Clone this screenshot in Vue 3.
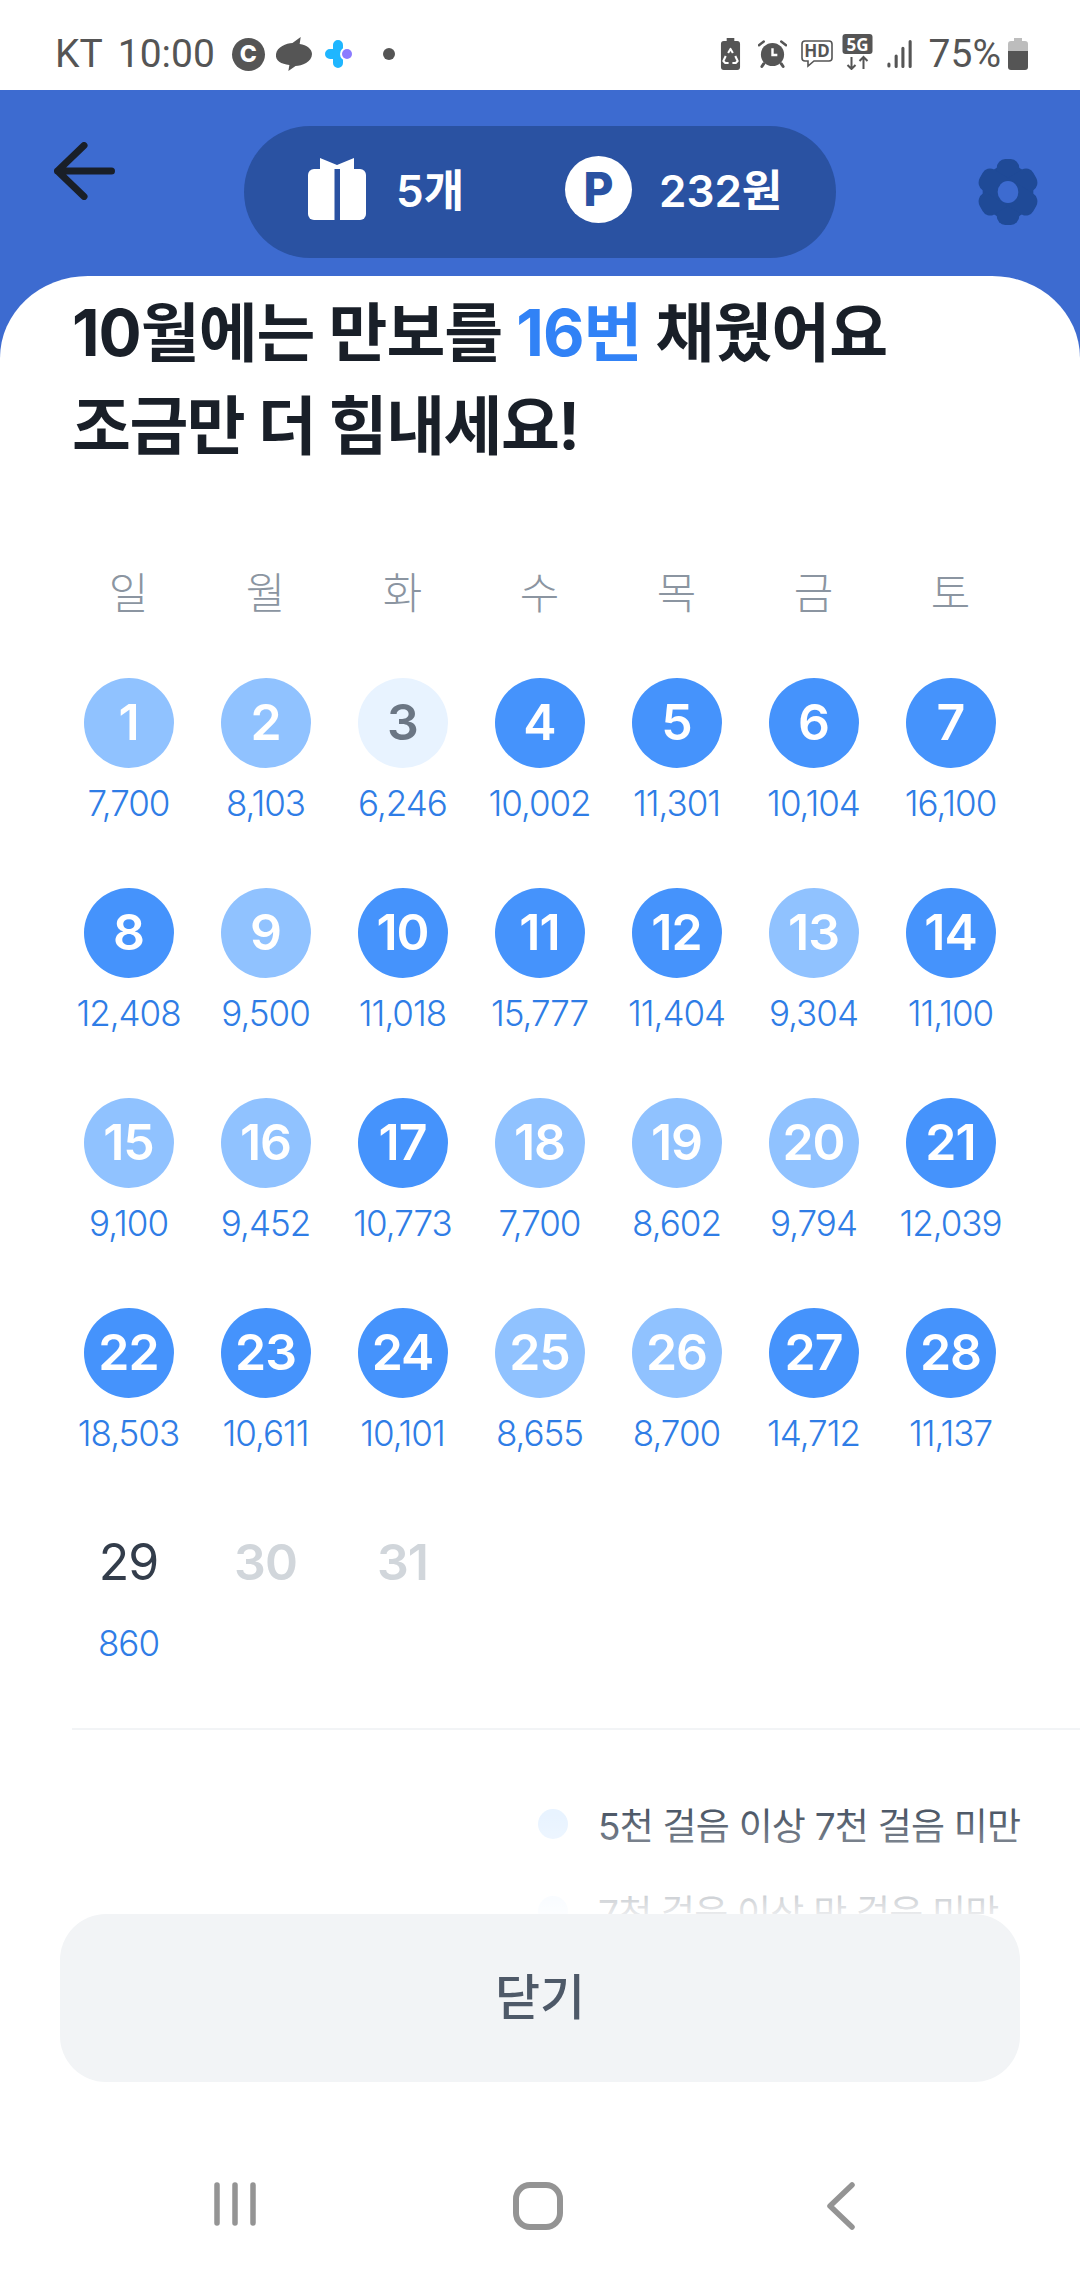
<script setup>
const weekdays = ['일', '월', '화', '수', '목', '금', '토']
const steps = [7700, 8103, 6246, 10002, 11301, 10104, 16100, 12408, 9500, 11018, 15777, 11404, 9304, 11100, 9100, 9452, 10773, 7700, 8602, 9794, 12039, 18503, 10611, 10101, 8655, 8700, 14712, 11137, 860]
const level = (n) => (n >= 10000 ? 'full' : n >= 7000 ? 'mid' : n >= 5000 ? 'low' : 'none')
const days = Array.from({ length: 31 }, (_, i) => {
  const n = steps[i]
  return {
    day: i + 1,
    label: n === undefined ? '' : n.toLocaleString('en-US'),
    cls: n === undefined ? 'future' : level(n),
  }
})
const legend = ['5천 걸음 이상 7천 걸음 미만', '7천 걸음 이상 만 걸음 미만']
</script>

<template>
  <div class="screen">
    <div class="status">
      <div class="status-left">
        <span class="carrier">KT</span>
        <span class="clock">10:00</span>
        <span class="c-badge">C</span>
        <svg class="i-blob" width="37" height="36" viewBox="0 0 36 36" preserveAspectRatio="none"><path d="M1 18C2 11 11 7 17 7L25 1L24 8C31 9 36 13 36 18C36 26 26 30 20 30L13 35L14 29C6 28 0 25 1 18Z" fill="#555"/></svg>
        <svg class="i-plus" width="28" height="28" viewBox="0 0 28 28"><path d="M13 5V23M5 14H18" stroke="#1fb6ff" stroke-width="10" stroke-linecap="round"/><circle cx="22" cy="14" r="7" fill="#fff"/><circle cx="22" cy="14" r="5" fill="#8b7bff"/></svg>
        <span class="dot"></span>
      </div>
      <div class="status-right">
        <svg width="21" height="32" viewBox="0 0 22 32" preserveAspectRatio="none"><path d="M7 0H15V3H18A3 3 0 0 1 21 6V29A3 3 0 0 1 18 32H4A3 3 0 0 1 1 29V6A3 3 0 0 1 4 3H7Z" fill="#555"/><path d="M8.500 15L11 11L13.500 15M16 18L18.500 23L16.500 25H13M9 25H5.500L3.500 23L6 18" stroke="#fff" stroke-width="2.200" fill="none" stroke-linejoin="round"/></svg>
        <svg class="i-alarm" width="29" height="30" viewBox="0 0 30 30"><path d="M1 6L6 2M29 6L24 2" stroke="#555" stroke-width="2.500" stroke-linecap="round"/><path d="M6 25L4 28M24 25L26 28" stroke="#555" stroke-width="3" stroke-linecap="round"/><circle cx="15" cy="15.500" r="12" fill="#555"/><path d="M15 9V16H20" stroke="#fff" stroke-width="2.500" fill="none"/></svg>
        <svg class="i-hd" width="32" height="28" viewBox="0 0 32 28"><path d="M4 1H28A3 3 0 0 1 31 4V18A3 3 0 0 1 28 21H13L7 26V21H4A3 3 0 0 1 1 18V4A3 3 0 0 1 4 1Z" fill="none" stroke="#555" stroke-width="1.600"/><text x="16" y="17" text-anchor="middle" class="svg-label">HD</text></svg>
        <svg class="i-5g" width="31" height="36" viewBox="0 0 30 36"><rect width="30" height="20" rx="3" fill="#555"/><text x="15" y="17" text-anchor="middle" class="svg-label inverse">5G</text><path d="M9 23V35M5 31L9 35L13 31M21 35V23M17 27L21 23L25 27" stroke="#555" stroke-width="2" fill="none"/></svg>
        <svg class="i-signal" width="27" height="30" viewBox="0 0 28 30"><path d="M2 25.500V27.500M9.500 17V28M16.500 9V28M24 2V28" stroke="#555" stroke-width="3.200" stroke-linecap="round"/></svg>
        <span class="pct">75%</span>
        <svg width="20" height="32" viewBox="0 0 20 32"><path d="M6 0H14V3H17A3 3 0 0 1 20 6V13H0V6A3 3 0 0 1 3 3H6Z" fill="#bdbdbd"/><path d="M0 13H20V29A3 3 0 0 1 17 32H3A3 3 0 0 1 0 29Z" fill="#555"/></svg>
      </div>
    </div>

    <header class="header">
      <svg class="back" width="62" height="58" viewBox="0 0 62 58"><path d="M57.500 29H3.500M30 3.500L3.500 29L30 54.500" stroke="#191f28" stroke-width="7" fill="none" stroke-linecap="round" stroke-linejoin="round"/></svg>
      <div class="pill">
        <div class="pill-item gift">
          <svg width="58" height="62" viewBox="0 0 58 62"><path d="M12 0L29 7L46 0V13H12Z" fill="#fff"/><rect y="11" width="58" height="51" rx="6" fill="#fff"/><rect x="26.500" y="11" width="5.500" height="51" fill="#2a52a2"/></svg>
          <span class="pill-text">5개</span>
        </div>
        <div class="pill-item point">
          <span class="p-mark">P</span>
          <span class="pill-text">232원</span>
        </div>
      </div>
      <svg class="gear" width="62" height="66" viewBox="0 0 66 66" preserveAspectRatio="none">
        <g fill="#1f4a97">
          <circle cx="33" cy="33" r="27"/>
          <rect x="21" y="0" width="24" height="66" rx="9"/>
          <rect x="21" y="0" width="24" height="66" rx="9" transform="rotate(60 33 33)"/>
          <rect x="21" y="0" width="24" height="66" rx="9" transform="rotate(120 33 33)"/>
        </g>
        <circle cx="33" cy="33" r="11" fill="#3d6bd0"/>
      </svg>
    </header>

    <div class="sheet-wrap">
      <main class="sheet">
        <div class="scroll">
          <h1 class="title">10월에는 만보를 <em>16번</em> 채웠어요<br><span class="title-2">조금만 더 힘내세요!</span></h1>
          <div class="calendar">
            <div class="weekdays">
              <span v-for="w in weekdays" :key="w">{{ w }}</span>
            </div>
            <div class="grid">
              <div v-for="d in days" :key="d.day" class="cell" :class="d.cls">
                <span class="num">{{ d.day }}</span>
                <span v-if="d.label" class="count">{{ d.label }}</span>
              </div>
            </div>
          </div>
          <ul class="legend">
            <li v-for="l in legend" :key="l"><i></i>{{ l }}</li>
          </ul>
        </div>
        <div class="footer">
          <button class="close">닫기</button>
        </div>
      </main>
    </div>

    <nav class="nav">
      <svg class="n-recent" width="42" height="44" viewBox="0 0 42 44"><path d="M3 3V41M21 3V41M39 3V41" stroke="#949494" stroke-width="5.500" stroke-linecap="round"/></svg>
      <svg class="n-home" width="50" height="48" viewBox="0 0 50 48"><rect x="3" y="3" width="44" height="42" rx="14" fill="none" stroke="#949494" stroke-width="6"/></svg>
      <svg class="n-back" width="28" height="48" viewBox="0 0 28 48"><path d="M25 3L3 24L25 45" stroke="#949494" stroke-width="5.500" fill="none" stroke-linecap="round" stroke-linejoin="round"/></svg>
    </nav>
  </div>
</template>

<style>
html, body { margin: 0; background: #fff; }
</style>

<style scoped>
.screen {
  width: 1080px;
  height: 2280px;
  display: flex;
  flex-direction: column;
  overflow: hidden;
  background: #fff;
  font-family: Inter, "Noto Sans CJK KR", sans-serif;
}
.status {
  height: 90px;
  flex: none;
  box-sizing: border-box;
  padding: 18px 52px 0 55px;
  display: flex;
  justify-content: space-between;
  align-items: center;
  color: #555;
  font-family: Roboto, sans-serif;
  font-size: 39px;
}
.status-left, .status-right { display: flex; align-items: center; }
.clock { margin-left: 15px; }
.c-badge {
  width: 33px; height: 33px; margin-left: 17px; border-radius: 50%;
  background: #555; color: #fff;
  font: 800 23px/33px Inter, sans-serif; text-align: center;
}
.i-blob { margin-left: 10px; }
.i-plus { margin-left: 13px; }
.dot { width: 12px; height: 12px; margin-left: 30px; border-radius: 50%; background: #555; }
.status-right .i-alarm { margin-left: 17px; }
.status-right .i-hd { margin-left: 14px; }
.status-right .i-5g { margin-left: 9px; margin-top: -4px; }
.status-right .i-signal { margin-left: 14px; }
.pct { margin: 0 7px 0 15px; }
.svg-label { font: 700 17px "Noto Sans", sans-serif; fill: #555; }
.svg-label.inverse { fill: #fff; }

.header {
  height: 186px;
  flex: none;
  box-sizing: border-box;
  padding: 36px 0 18px 54px;
  background: #3d6bd0;
  display: flex;
  align-items: center;
}
.back { align-self: flex-start; margin-top: 16px; }
.pill {
  width: 592px; height: 132px;
  margin-left: 128px;
  border-radius: 66px;
  background: #2a52a2;
  box-sizing: border-box;
  padding-left: 64px;
  display: flex;
  align-items: center;
  color: #fff;
  font-size: 44px;
  font-weight: 600;
  flex: none;
}
.pill-item { display: flex; align-items: center; }
.pill-text { margin-top: -8px; }
.gift { gap: 30px; width: 257px; }
.gift svg { margin-top: -6px; }
.point { gap: 27px; }
.p-mark {
  width: 67px; height: 67px; border-radius: 50%;
  background: #fff; color: #2a52a2;
  font: 800 46px/67px Inter, sans-serif; text-align: center;
  margin-top: -6px;
}
.gear { margin-left: 141px; flex: none; }

.sheet-wrap {
  flex: 1;
  min-height: 0;
  display: flex;
  background: #3d6bd0;
}
.sheet {
  flex: 1;
  min-width: 0;
  display: flex;
  flex-direction: column;
  border-radius: 88px 88px 0 0 / 82px 82px 0 0;
  overflow: hidden;
  background: #fff;
}
.scroll { flex: 1; min-height: 0; overflow: hidden; position: relative; }
.title {
  margin: 10px 0 0 72px;
  font-size: 64px;
  line-height: 93px;
  font-weight: 700;
  color: #191f28;
  letter-spacing: -1px;
}
.title em { font-style: normal; color: #3182f6; }
.title-2 { letter-spacing: -1.500px; }
.calendar { padding: 0 61px 0 60px; margin-top: 91px; }
.weekdays, .grid { display: grid; grid-template-columns: repeat(7, 1fr); }
.weekdays {
  height: 60px;
  line-height: 60px;
  text-align: center;
  font-size: 43px;
  font-weight: 300;
  color: #8b95a1;
  margin-bottom: 55px;
}
.grid { grid-auto-rows: 210px; }
.cell { display: flex; flex-direction: column; align-items: center; }
.num {
  width: 90px; height: 90px;
  border-radius: 50%;
  line-height: 88px;
  text-align: center;
  font-size: 50px;
  font-weight: 600;
  letter-spacing: -1px;
  color: #fff;
}
.count { margin-top: 16px; font-size: 35px; line-height: 38px; font-weight: 300; color: #2f7de6; letter-spacing: -1px; }
.full .num { background: #4593fc; }
.mid .num { background: #90c2ff; }
.low .num { background: #e8f3ff; color: #6b7684; }
.none .num { color: #333d4b; font-weight: 400; }
.future .num { color: #d1d6db; font-weight: 600; }

.legend {
  list-style: none;
  margin: 0 0 0 72px;
  padding: 50px 0 0 466px;
  border-top: 2px solid #f2f4f6;
}
.legend li {
  height: 87px;
  display: flex;
  align-items: center;
  font-size: 37px;
  font-weight: 400;
  color: #4e5968;
  white-space: nowrap;
  letter-spacing: -0.800px;
}
.legend i { width: 30px; height: 30px; margin-right: 30px; border-radius: 50%; background: #e8f3ff; flex: none; }

.footer {
  flex: none;
  position: relative;
  padding: 0 60px 66px;
  background: #fff;
}
.footer::before {
  content: "";
  position: absolute;
  left: 0; right: 0;
  bottom: 100%;
  height: 100px;
  background: linear-gradient(to bottom, rgba(255,255,255,0), rgba(255,255,255,0.88));
}
.close {
  display: block;
  width: 100%;
  height: 168px;
  border: 0;
  border-radius: 46px;
  background: #f2f4f6;
  color: #4e5968;
  font: 500 49px/160px "Noto Sans CJK KR", sans-serif;
  padding: 0 0 8px;
  position: relative;
}
.nav {
  height: 132px;
  flex: none;
  box-sizing: border-box;
  display: flex;
  align-items: flex-start;
  padding: 34px 0 0 214px;
  background: #fff;
}
.n-home { margin-left: 257px; }
.n-back { margin-left: 264px; }
</style>
